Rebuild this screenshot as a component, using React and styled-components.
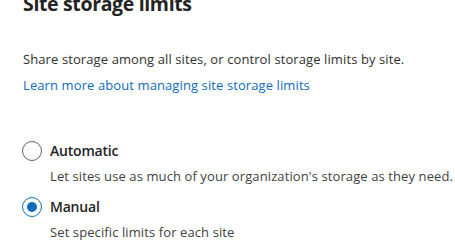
import React, { useState } from "react";
import styled, { createGlobalStyle } from "styled-components";

const GlobalStyle = createGlobalStyle`
  html, body {
    margin: 0;
    padding: 0;
    background: #ffffff;
  }
  body {
    font-family: "Open Sans", "Noto Sans", "Liberation Sans", sans-serif;
    color: #242424;
    overflow: hidden;
  }
`;

const options = [
  {
    id: "automatic",
    label: "Automatic",
    desc: "Let sites use as much of your organization's storage as they need.",
  },
  {
    id: "manual",
    label: "Manual",
    desc: "Set specific limits for each site",
  },
];

const App = () => {
  const [value, setValue] = useState("manual");

  return (
    <Page>
      <GlobalStyle />
      <Title>Site storage limits</Title>
      <Intro>Share storage among all sites, or control storage limits by site.</Intro>
      <LearnLink href="#">Learn more about managing site storage limits</LearnLink>
      <RadioGroup role="radiogroup">
        {options.map((opt) => (
          <Option key={opt.id}>
            <RadioRow onClick={() => setValue(opt.id)}>
              <RadioCircle checked={value === opt.id} />
              <RadioLabel>{opt.label}</RadioLabel>
            </RadioRow>
            <OptionDesc>{opt.desc}</OptionDesc>
          </Option>
        ))}
      </RadioGroup>
    </Page>
  );
};

const Page = styled.div`
  padding: 0 23px;
  box-sizing: border-box;
  width: 455px;
  height: 250px;
  display: flex;
  flex-direction: column;
`;

const Title = styled.h2`
  margin: -10px 0 0 0;
  font-size: 19.5px;
  line-height: 28px;
  font-weight: 700;
  letter-spacing: -0.35px;
  color: #242424;
`;

const Intro = styled.p`
  margin: 31px 0 0 0;
  font-size: 13px;
  line-height: 20px;
  letter-spacing: 0.1px;
  color: #323130;
  white-space: nowrap;
`;

const LearnLink = styled.a`
  margin-top: 6px;
  font-size: 13px;
  line-height: 20px;
  letter-spacing: 0.1px;
  color: #0f6cbd;
  text-decoration: none;
  white-space: nowrap;
`;

const RadioGroup = styled.div`
  margin-top: 46px;
  display: flex;
  flex-direction: column;
  gap: 11px;
`;

const Option = styled.div`
  display: flex;
  flex-direction: column;
  gap: 5px;
`;

const RadioRow = styled.div`
  display: flex;
  align-items: center;
  gap: 8px;
  margin-left: -1px;
  height: 20px;
  cursor: pointer;
`;

const RadioCircle = styled.span`
  width: 20px;
  height: 20px;
  box-sizing: border-box;
  border-radius: 50%;
  border: 1px solid ${(p) => (p.checked ? "#0f6cbd" : "#616161")};
  display: flex;
  align-items: center;
  justify-content: center;
  flex-shrink: 0;

  &::after {
    content: "";
    width: 10px;
    height: 10px;
    border-radius: 50%;
    background: #0f6cbd;
    display: ${(p) => (p.checked ? "block" : "none")};
  }
`;

const RadioLabel = styled.span`
  font-size: 14px;
  line-height: 20px;
  font-weight: 600;
  letter-spacing: -0.2px;
  color: #242424;
`;

const OptionDesc = styled.div`
  padding-left: 27px;
  font-size: 13px;
  line-height: 20px;
  letter-spacing: 0.1px;
  color: #424242;
  white-space: nowrap;
`;

export default App;
